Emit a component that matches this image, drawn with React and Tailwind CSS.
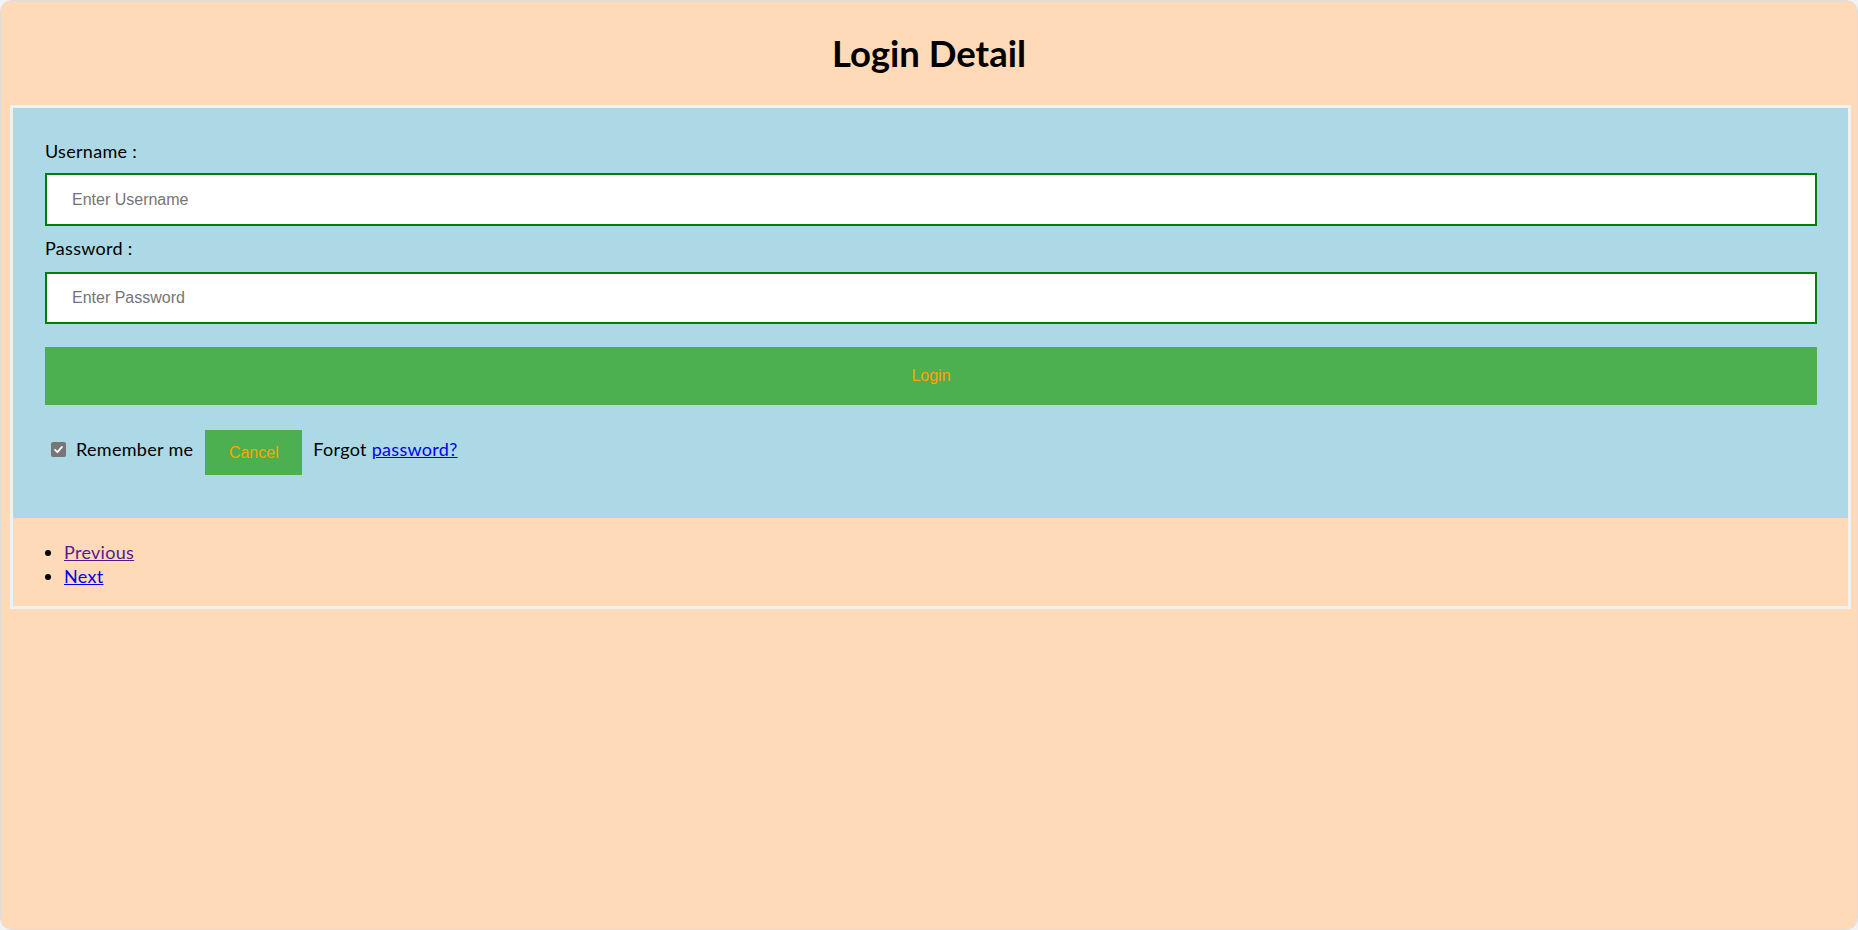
import * as React from "react";

// Checked box drawn by hand so its grey matches the picture
const GreyCheckbox = () => (
  <span className="flex h-[15px] w-[15px] items-center justify-center rounded-[2px] bg-[#767676]">
    <svg viewBox="0 0 12 12" className="h-[11px] w-[11px]">
      <path
        d="M2.2 6.3 L4.8 8.9 L9.8 3.2"
        fill="none"
        stroke="#ffffff"
        strokeWidth="1.9"
        strokeLinecap="round"
        strokeLinejoin="round"
      />
    </svg>
  </span>
);

export default function App() {
  return (
    <div className="h-[930px] w-full bg-[#f3f3f3]">
      <div className="flex h-full flex-col rounded-[12px] border border-[#dedede] bg-[#ffdab9] font-['Lato',sans-serif] text-[18px] tracking-[0.3px] text-black">
        {/* Heading */}
        <div className="h-[104px] pt-[30px] text-center">
          <h1 className="text-[36.5px] font-bold leading-[44px] tracking-normal">Login Detail</h1>
        </div>

        {/* Form */}
        <form className="ml-[9px] mr-[6px] border-[3px] border-[#f1f1f1]">
          <div className="bg-[#add8e6] pb-[43px] pl-[32px] pr-[31px] pt-[32px]">
            <label className="block leading-[23px]">Username :</label>
            <input
              type="text"
              placeholder="Enter Username"
              className="mt-[10px] block h-[53px] w-full border-2 border-[#008000] bg-white pl-[25px] font-['Liberation_Sans',Arial,sans-serif] text-[16px] tracking-normal outline-none placeholder:text-[#757575]"
            />
            <label className="mt-[11px] block leading-[23px]">Password :</label>
            <input
              type="password"
              placeholder="Enter Password"
              className="mt-[12px] block h-[52px] w-full border-2 border-[#008000] bg-white pl-[25px] font-['Liberation_Sans',Arial,sans-serif] text-[16px] tracking-normal outline-none placeholder:text-[#757575]"
            />
            <button
              type="button"
              className="mt-[23px] block h-[58px] w-full bg-[#4caf50] font-['Liberation_Sans',Arial,sans-serif] text-[16px] tracking-normal text-[#ffa500]"
            >
              Login
            </button>

            <div className="mt-[25px] flex h-[45px] items-center">
              <span className="mb-[7px] ml-[6px]">
                <GreyCheckbox />
              </span>
              <span className="mb-[6px] ml-[10px] leading-[23px]">Remember me</span>
              <button
                type="button"
                className="ml-[12px] h-[45px] w-[97px] bg-[#4caf50] font-['Liberation_Sans',Arial,sans-serif] text-[16px] tracking-normal text-[#ffa500]"
              >
                Cancel
              </button>
              <span className="mb-[6px] ml-[11px] leading-[23px]">
                Forgot{" "}
                <a href="#" className="text-[#0000ee] underline">
                  password?
                </a>
              </span>
            </div>
          </div>

          <ul className="list-disc pb-[18px] pl-[51px] pt-[22px] leading-[24px]">
            <li>
              <a href="#" className="text-[#551a8b] underline">
                Previous
              </a>
            </li>
            <li>
              <a href="#" className="text-[#0000ee] underline">
                Next
              </a>
            </li>
          </ul>
        </form>
      </div>
    </div>
  );
}
